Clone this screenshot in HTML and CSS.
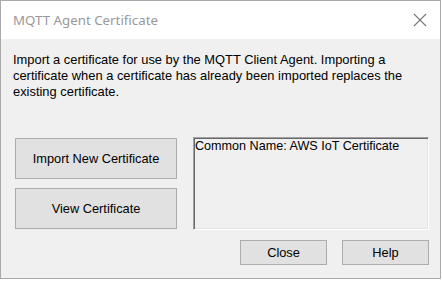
FILE: index.html
```html
<!DOCTYPE html>
<html>
<head>
<meta charset="utf-8">
<link rel="stylesheet" href="styles.css">
</head>
<body>
<div class="window">
  <div class="titlebar">
    <span class="title">MQTT Agent Certificate</span>
    <svg class="close-x" width="14" height="14" viewBox="0 0 14 14"><path d="M1 1 L13 13 M13 1 L1 13" stroke="#777" stroke-width="1.1" fill="none"/></svg>
  </div>
  <div class="client">
    <p class="desc">Import a certificate for use by the MQTT Client Agent. Importing a certificate when a certificate has already been imported replaces the existing certificate.</p>
    <div class="main">
      <div class="left-col">
        <button class="btn big">Import New Certificate</button>
        <button class="btn big">View Certificate</button>
      </div>
      <div class="right-col">
        <div class="listbox">Common Name: AWS IoT Certificate</div>
        <div class="actions">
          <button class="btn small">Close</button>
          <button class="btn small">Help</button>
        </div>
      </div>
    </div>
  </div>
</div>
</body>
</html>
```
FILE: styles.css
```css
html, body {
  margin: 0;
  padding: 0;
  background: #ffffff;
}
.window {
  width: 439px;
  height: 277px;
  border: 1px solid #a9a9a9;
  display: flex;
  flex-direction: column;
  font-family: "Liberation Sans", Arial, sans-serif;
}
.titlebar {
  height: 38px;
  background: #ffffff;
  display: flex;
  align-items: center;
  justify-content: space-between;
  padding: 0 12px 0 12px;
}
.title {
  font-family: "Noto Sans", "Open Sans", sans-serif;
  font-size: 13.3px;
  color: #999999;
  margin-top: -1px;
}
.close-x {
  display: block;
  margin-right: 1px;
  margin-top: -1px;
}
.client {
  flex: 1;
  background: #f0f0f0;
  padding: 13px 0 0 12px;
}
.desc {
  margin: 0;
  font-size: 12.9px;
  line-height: 16px;
  color: #000;
  width: 410px;
}
.main {
  display: flex;
  margin-top: 37px;
  padding-left: 2px;
  gap: 16px;
}
.left-col {
  display: flex;
  flex-direction: column;
  gap: 9px;
  padding-top: 1px;
}
.btn {
  background: #e1e1e1;
  border: 1px solid #adadad;
  font-family: "Liberation Sans", Arial, sans-serif;
  font-size: 12.8px;
  color: #000;
  padding: 0;
  margin: 0;
}
.btn.big {
  width: 162px;
  height: 41px;
}
.btn.small {
  width: 87px;
  height: 25px;
}
.right-col {
  display: flex;
  flex-direction: column;
}
.listbox {
  width: 232px;
  height: 89px;
  border-top: 1px solid #a0a0a0;
  border-left: 1px solid #a0a0a0;
  border-right: 1px solid #ffffff;
  border-bottom: 1px solid #ffffff;
  box-shadow: inset 1px 1px 0 #696969, inset -1px -1px 0 #e3e3e3;
  padding: 1px;
  font-size: 12.6px;
  line-height: 15px;
  color: #000;
  background: #f0f0f0;
}
.actions {
  display: flex;
  justify-content: flex-end;
  gap: 15px;
  margin-top: 10px;
}
```
